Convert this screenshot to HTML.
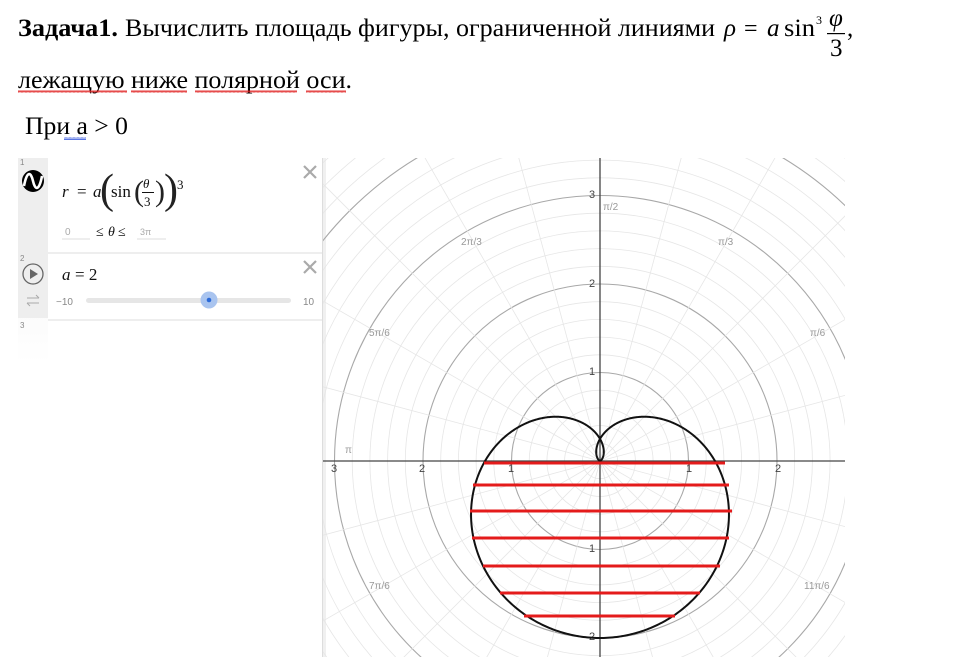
<!DOCTYPE html>
<html><head><meta charset="utf-8"><style>
html,body{margin:0;padding:0;background:#fff;width:965px;height:657px;overflow:hidden}
svg{position:absolute;left:0;top:0;display:block}
</style></head><body>
<svg id="s" width="965" height="657" xmlns="http://www.w3.org/2000/svg">
<defs>
<clipPath id="gc"><rect x="323" y="158" width="522" height="499"/></clipPath>
<linearGradient id="fade" x1="0" y1="0" x2="0" y2="1"><stop offset="0" stop-color="#eee"/><stop offset="1" stop-color="#fff"/></linearGradient>
<pattern id="wav" width="4" height="3" patternUnits="userSpaceOnUse"><path d="M0 2.5 L1 0.5 L2 2.5 L3 0.5 L4 2.5" stroke="#e02020" stroke-width="0.8" fill="none"/></pattern>
<pattern id="wavb" width="4" height="3" patternUnits="userSpaceOnUse"><path d="M0 2.5 L1 0.5 L2 2.5 L3 0.5 L4 2.5" stroke="#3355dd" stroke-width="0.8" fill="none"/></pattern>
</defs>
<g font-family="Liberation Serif, serif" fill="#000">
<text x="18" y="36" font-size="25" textLength="100" lengthAdjust="spacingAndGlyphs" font-weight="bold">Задача1.</text>
<text x="125" y="36" font-size="25" textLength="590" lengthAdjust="spacingAndGlyphs">Вычислить площадь фигуры, ограниченной линиями</text>
<text x="724" y="36" font-size="25" font-style="italic">ρ</text>
<text x="744" y="36" font-size="24">=</text>
<text x="767" y="36" font-size="25" font-style="italic">a</text>
<text x="784" y="36" font-size="25" textLength="31" lengthAdjust="spacingAndGlyphs">sin</text>
<text x="816" y="24" font-size="12">3</text>
<text x="829" y="26" font-size="25" font-style="italic">φ</text>
<rect x="827" y="33" width="18" height="1.2"/>
<text x="830" y="56" font-size="25">3</text>
<text x="847" y="36" font-size="25">,</text>
<text x="18" y="88" font-size="25" textLength="334" lengthAdjust="spacingAndGlyphs">лежащую ниже полярной оси.</text>
<rect x="18" y="90" width="109" height="3" fill="url(#wav)"/>
<rect x="131" y="90" width="56" height="3" fill="url(#wav)"/>
<rect x="195" y="90" width="102" height="3" fill="url(#wav)"/>
<rect x="306" y="90" width="40" height="3" fill="url(#wav)"/>
<text x="25" y="134" font-size="25" textLength="103" lengthAdjust="spacingAndGlyphs">При a &gt; 0</text>
<rect x="64" y="137" width="22" height="3" fill="url(#wavb)"/>
</g>
<rect x="18" y="158" width="30" height="205" fill="url(#fade)"/>
<rect x="18" y="158" width="30" height="160" fill="#eee"/>
<line x1="48" y1="253" x2="322" y2="253" stroke="#ddd"/>
<line x1="48" y1="320" x2="322" y2="320" stroke="#ddd"/>
<g font-family="Liberation Sans, sans-serif" fill="#888" font-size="8">
<text x="20" y="165">1</text><text x="20" y="261">2</text><text x="20" y="328">3</text>
</g>
<circle cx="33" cy="181" r="11" fill="#000"/>
<path d="M24 186 C27 170 31 172 33 181 C35 190 39 192 42 176" stroke="#fff" stroke-width="2.6" fill="none"/>
<circle cx="33" cy="274" r="10" fill="none" stroke="#666" stroke-width="1.3"/>
<path d="M30 269 L38 274 L30 279Z" fill="#666"/>
<path d="M27 298 h12 M36 295 l3 3 M27 303 h12 M30 306 l-3 -3" stroke="#aaa" stroke-width="1" fill="none"/>
<g font-family="Liberation Serif, serif" fill="#111">
<text x="62" y="197" font-size="17" font-style="italic">r</text>
<text x="77" y="197" font-size="17">=</text>
<text x="93" y="197" font-size="17" font-style="italic">a</text>
<text x="100" y="203" font-size="42" fill="#222">(</text>
<text x="111" y="197" font-size="17">sin</text>
<text x="134" y="201" font-size="30" fill="#222">(</text>
<text x="143" y="188" font-size="13" font-style="italic">θ</text>
<rect x="142" y="192" width="12" height="1"/>
<text x="144" y="206" font-size="13">3</text>
<text x="155" y="201" font-size="30" fill="#222">)</text>
<text x="164" y="203" font-size="42" fill="#222">)</text>
<text x="177" y="189" font-size="13">3</text>
<text x="96" y="236" font-size="14">≤</text>
<text x="108" y="236" font-size="14" font-style="italic">θ</text>
<text x="118" y="236" font-size="14">≤</text>
<text x="62" y="280" font-size="17" font-style="italic">a</text>
<text x="75" y="280" font-size="17">= 2</text>
</g>
<g font-family="Liberation Sans, sans-serif" fill="#aaa">
<text x="65" y="235" font-size="10">0</text>
<line x1="62" y1="239" x2="90" y2="239" stroke="#ddd"/>
<text x="140" y="235" font-size="9">3π</text>
<line x1="137" y1="239" x2="166" y2="239" stroke="#ddd"/>
<text x="56" y="305" font-size="10" fill="#888">−10</text>
<text x="303" y="305" font-size="10" fill="#888">10</text>
</g>
<rect x="86" y="298" width="205" height="5" rx="2.5" fill="#e6e6e6"/>
<circle cx="209" cy="300" r="8.5" fill="#a9c4ef"/>
<circle cx="209" cy="300" r="2.3" fill="#2b6ad8"/>
<path d="M304 166 l12 12 M316 166 l-12 12 M304 261 l12 12 M316 261 l-12 12" stroke="#aaa" stroke-width="2.2"/>
<line x1="322.5" y1="158" x2="322.5" y2="657" stroke="#ddd"/>
<rect x="323" y="158" width="3" height="499" fill="#f0f0f0"/>
<g id="graph" clip-path="url(#gc)"></g>
</svg>
<script>
var g=document.getElementById('graph'),ns='http://www.w3.org/2000/svg';
var cx=600,cy=461,u=88.5;
function el(t,a){var e=document.createElementNS(ns,t);for(var k in a)e.setAttribute(k,a[k]);g.appendChild(e);return e;}
for(var i=1;i<=30;i++){var r=i*0.2;var maj=(i%5==0);el('circle',{cx:cx,cy:cy,r:r*u,fill:'none',stroke:maj?'#a8a8a8':'#e6e6e6','stroke-width':maj?1.1:0.8});}
for(var k=0;k<24;k++){var a=k*Math.PI/12;el('line',{x1:cx,y1:cy,x2:cx+700*Math.cos(a),y2:cy-700*Math.sin(a),stroke:'#e6e6e6','stroke-width':0.8});}
el('line',{x1:323,y1:cy,x2:845,y2:cy,stroke:'#444','stroke-width':1.3});
el('line',{x1:cx,y1:158,x2:cx,y2:657,stroke:'#444','stroke-width':1.3});
function tx(x,y,s,c,sz){var e=el('text',{x:x,y:y,fill:c||'#555','font-family':'Liberation Sans, sans-serif','font-size':sz||10});e.textContent=s;}
tx(589,198,'3','#444',11);tx(589,287,'2','#444',11);tx(589,375,'1','#444',11);tx(589,552,'1','#444',11);tx(589,640,'2','#444',11);
tx(331,472,'3','#444',11);tx(419,472,'2','#444',11);tx(508,472,'1','#444',11);tx(686,472,'1','#444',11);tx(775,472,'2','#444',11);
tx(603,210,'π/2','#999');tx(461,245,'2π/3','#999');tx(718,245,'π/3','#999');tx(369,336,'5π/6','#999');tx(810,336,'π/6','#999');
tx(345,453,'π','#999');tx(369,589,'7π/6','#999');tx(804,589,'11π/6','#999');
var d='';for(var j=0;j<=900;j++){var t=j/900*3*Math.PI;var rr=2*Math.pow(Math.sin(t/3),3);var x=cx+rr*u*Math.cos(t),y=cy-rr*u*Math.sin(t);d+=(j?'L':'M')+x.toFixed(2)+' '+y.toFixed(2);}
el('path',{d:d,fill:'none',stroke:'#111','stroke-width':2});
var rows=[[463,484,725],[485,473,729],[511,470,732],[538,472,729],[566,483,720],[593,500,700],[616,524,675]];
rows.forEach(function(r){el('line',{x1:r[1],y1:r[0],x2:r[2],y2:r[0],stroke:'#e41b1b','stroke-width':3});});
</script>
</body></html>
